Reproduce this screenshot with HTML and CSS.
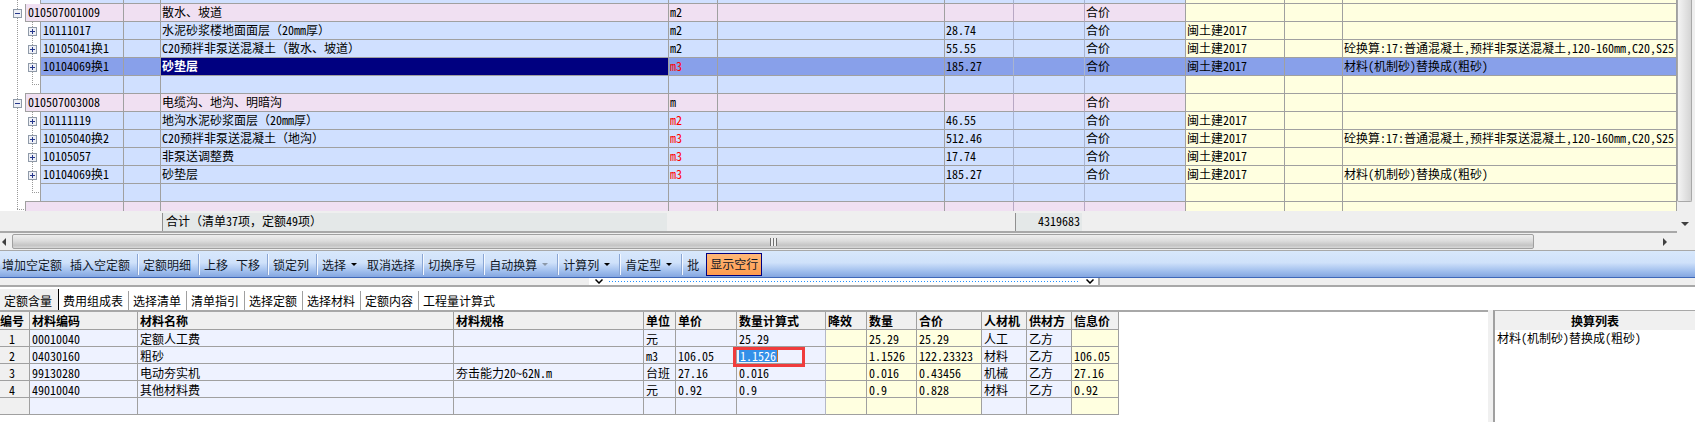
FILE: index.html
```html
<!DOCTYPE html>
<html lang="zh-CN">
<head>
    <meta charset="UTF-8">
    <title>定额</title>
    <link rel="stylesheet" href="styles.css">
</head>
<body>

    <!-- upper grid -->
    <div class="main">
        <div class="main-left">
            <div class="grid-wrap">
                <table class="grid">
                    <colgroup>
                        <col class="c-a"><col class="c-b"><col class="c-code"><col class="c-x"><col class="c-name"><col class="c-unit"><col class="c-y"><col class="c-price"><col class="c-z"><col class="c-type"><col class="c-std"><col class="c-w"><col class="c-note">
                    </colgroup>
                    <tr class="row-cut blue">
                        <td class="a"></td><td class="b"></td><td class="code"></td><td></td><td></td><td></td><td></td><td class="thin"></td><td class="thin"></td><td></td><td class="yel"></td><td class="yel"></td><td class="yel"></td>
                    </tr>
                    <tr class="pink">
                        <td class="a"><span class="exp minus"></span></td><td class="code" colspan="2">010507001009</td><td></td><td>散水、坡道</td><td>m2</td><td></td><td class="thin"></td><td class="thin"></td><td>合价</td><td class="yel"></td><td class="yel"></td><td class="yel"></td>
                    </tr>
                    <tr class="blue">
                        <td class="a"></td><td class="b line"><span class="exp plus"></span></td><td class="code">10111017</td><td></td><td>水泥砂浆楼地面面层<span class="fw">（</span>20mm厚<span class="fw">）</span></td><td>m2</td><td></td><td class="thin">28.74</td><td class="thin"></td><td>合价</td><td class="yel">闽土建2017</td><td class="yel"></td><td class="yel"></td>
                    </tr>
                    <tr class="blue">
                        <td class="a"></td><td class="b line"><span class="exp plus"></span></td><td class="code">10105041换1</td><td></td><td>C20预拌非泵送混凝土<span class="fw">（</span>散水、坡道<span class="fw">）</span></td><td>m2</td><td></td><td class="thin">55.55</td><td class="thin"></td><td>合价</td><td class="yel">闽土建2017</td><td class="yel"></td><td class="yel"><div class="clip">砼换算:17:普通混凝土,预拌非泵送混凝土,120-160mm,C20,S25,</div></td>
                    </tr>
                    <tr class="blue sel">
                        <td class="a"></td><td class="b line"><span class="exp plus"></span></td><td class="code">10104069换1</td><td></td><td class="cur">砂垫层</td><td class="red">m3</td><td></td><td class="thin">185.27</td><td class="thin"></td><td>合价</td><td>闽土建2017</td><td></td><td>材料(机制砂)替换成(粗砂)</td>
                    </tr>
                    <tr class="blue">
                        <td class="a"></td><td class="b end"></td><td class="code"></td><td></td><td></td><td></td><td></td><td class="thin"></td><td class="thin"></td><td></td><td class="yel"></td><td class="yel"></td><td class="yel"></td>
                    </tr>
                    <tr class="pink">
                        <td class="a"><span class="exp minus"></span></td><td class="code" colspan="2">010507003008</td><td></td><td>电缆沟、地沟、明暗沟</td><td>m</td><td></td><td class="thin"></td><td class="thin"></td><td>合价</td><td class="yel"></td><td class="yel"></td><td class="yel"></td>
                    </tr>
                    <tr class="blue">
                        <td class="a"></td><td class="b line"><span class="exp plus"></span></td><td class="code">10111119</td><td></td><td>地沟水泥砂浆面层<span class="fw">（</span>20mm厚<span class="fw">）</span></td><td class="red">m2</td><td></td><td class="thin">46.55</td><td class="thin"></td><td>合价</td><td class="yel">闽土建2017</td><td class="yel"></td><td class="yel"></td>
                    </tr>
                    <tr class="blue">
                        <td class="a"></td><td class="b line"><span class="exp plus"></span></td><td class="code">10105040换2</td><td></td><td>C20预拌非泵送混凝土<span class="fw">（</span>地沟<span class="fw">）</span></td><td class="red">m3</td><td></td><td class="thin">512.46</td><td class="thin"></td><td>合价</td><td class="yel">闽土建2017</td><td class="yel"></td><td class="yel"><div class="clip">砼换算:17:普通混凝土,预拌非泵送混凝土,120-160mm,C20,S25,</div></td>
                    </tr>
                    <tr class="blue">
                        <td class="a"></td><td class="b line"><span class="exp plus"></span></td><td class="code">10105057</td><td></td><td>非泵送调整费</td><td class="red">m3</td><td></td><td class="thin">17.74</td><td class="thin"></td><td>合价</td><td class="yel">闽土建2017</td><td class="yel"></td><td class="yel"></td>
                    </tr>
                    <tr class="blue">
                        <td class="a"></td><td class="b line"><span class="exp plus"></span></td><td class="code">10104069换1</td><td></td><td>砂垫层</td><td class="red">m3</td><td></td><td class="thin">185.27</td><td class="thin"></td><td>合价</td><td class="yel">闽土建2017</td><td class="yel"></td><td class="yel">材料(机制砂)替换成(粗砂)</td>
                    </tr>
                    <tr class="blue">
                        <td class="a"></td><td class="b end"></td><td class="code"></td><td></td><td></td><td></td><td></td><td class="thin"></td><td class="thin"></td><td></td><td class="yel"></td><td class="yel"></td><td class="yel"></td>
                    </tr>
                    <tr class="pink">
                        <td class="a last"></td><td class="code" colspan="2"></td><td></td><td></td><td></td><td></td><td class="thin"></td><td class="thin"></td><td></td><td class="yel"></td><td class="yel"></td><td class="yel"></td>
                    </tr>
                </table>
            </div>
            <div class="sum">
                <div class="sum-label">合计<span class="fw">（</span>清单37项<span class="fw">，</span>定额49项<span class="fw">）</span></div>
                <div class="sum-total">4319683</div>
            </div>
            <div class="hscroll">
                <span class="arrow-left"></span>
                <div class="hthumb"><span class="grip"></span></div>
                <span class="arrow-right"></span>
            </div>
        </div>
        <div class="vscroll">
            <div class="vthumb"></div>
            <span class="arrow-down"></span>
        </div>
    </div>

    <!-- toolbar -->
    <div class="toolbar">
        <span class="tb">增加空定额</span>
        <span class="tb">插入空定额</span>
        <i class="sep"></i>
        <span class="tb">定额明细</span>
        <i class="sep"></i>
        <span class="tb">上移</span>
        <span class="tb">下移</span>
        <i class="sep"></i>
        <span class="tb">锁定列</span>
        <i class="sep"></i>
        <span class="tb">选择<b class="caret"></b></span>
        <span class="tb">取消选择</span>
        <i class="sep"></i>
        <span class="tb">切换序号</span>
        <i class="sep"></i>
        <span class="tb">自动换算<b class="caret off"></b></span>
        <i class="sep"></i>
        <span class="tb">计算列<b class="caret"></b></span>
        <i class="sep"></i>
        <span class="tb">肯定型<b class="caret"></b></span>
        <i class="sep"></i>
        <span class="tb">批</span>
        <i class="sep"></i>
        <span class="tb tb-on">显示空行</span>
    </div>

    <div class="splitter">
        <div class="split-handle">
            <svg class="chev" width="8" height="5" viewBox="0 0 8 5"><polyline points="0.5,0.5 4,4 7.5,0.5" fill="none" stroke="#000" stroke-width="1.5"/></svg>
            <span class="dots"></span>
            <svg class="chev" width="8" height="5" viewBox="0 0 8 5"><polyline points="0.5,0.5 4,4 7.5,0.5" fill="none" stroke="#000" stroke-width="1.5"/></svg>
        </div>
    </div>

    <!-- tabs -->
    <div class="tabs">
        <span class="tab active">定额含量</span>
        <span class="tab">费用组成表</span>
        <span class="tab">选择清单</span>
        <span class="tab">清单指引</span>
        <span class="tab">选择定额</span>
        <span class="tab">选择材料</span>
        <span class="tab">定额内容</span>
        <span class="tab">工程量计算式</span>
    </div>

    <!-- lower grid + side list -->
    <div class="lower">
        <div class="lower-left">
            <table class="sub">
                <colgroup>
                    <col class="s-no"><col class="s-code"><col class="s-name"><col class="s-spec"><col class="s-unit"><col class="s-price"><col class="s-calc"><col class="s-eff"><col class="s-qty"><col class="s-sum"><col class="s-kind"><col class="s-sup"><col class="s-info">
                </colgroup>
                <tr class="head">
                    <th class="no">编号</th><th>材料编码</th><th>材料名称</th><th>材料规格</th><th>单位</th><th>单价</th><th>数量计算式</th><th>降效</th><th>数量</th><th>合价</th><th>人材机</th><th>供材方</th><th>信息价</th>
                </tr>
                <tr>
                    <td class="no">1</td><td>00010040</td><td>定额人工费</td><td></td><td>元</td><td></td><td class="thin">25.29</td><td class="yel"></td><td class="yel">25.29</td><td class="yel">25.29</td><td>人工</td><td>乙方</td><td class="yel"></td>
                </tr>
                <tr>
                    <td class="no">2</td><td>04030160</td><td>粗砂</td><td></td><td>m3</td><td>106.05</td><td class="thin editing"><span class="picked">1.1526</span><span class="mark"></span></td><td class="yel"></td><td class="yel">1.1526</td><td class="yel">122.23323</td><td>材料</td><td>乙方</td><td class="yel">106.05</td>
                </tr>
                <tr>
                    <td class="no">3</td><td>99130280</td><td>电动夯实机</td><td>夯击能力20～62N.m</td><td>台班</td><td>27.16</td><td class="thin">0.016</td><td class="yel"></td><td class="yel">0.016</td><td class="yel">0.43456</td><td>机械</td><td>乙方</td><td class="yel">27.16</td>
                </tr>
                <tr>
                    <td class="no">4</td><td>49010040</td><td>其他材料费</td><td></td><td>元</td><td>0.92</td><td class="thin">0.9</td><td class="yel"></td><td class="yel">0.9</td><td class="yel">0.828</td><td>材料</td><td>乙方</td><td class="yel">0.92</td>
                </tr>
                <tr>
                    <td class="no"></td><td></td><td></td><td></td><td></td><td></td><td class="thin"></td><td class="yel"></td><td class="yel"></td><td class="yel"></td><td></td><td></td><td class="yel"></td>
                </tr>
            </table>
        </div>
        <div class="side">
            <div class="side-head">换算列表</div>
            <div class="side-body">材料(机制砂)替换成(粗砂)</div>
        </div>
    </div>

</body>
</html>
```

FILE: styles.css
```css
* {
    box-sizing: border-box;
}
html, body {
    height: 422px;
    overflow: hidden;
}
body {
    margin: 0;
    background: #fff;
    color: #000;
    font-family: "Noto Sans CJK SC", "Liberation Sans", sans-serif;
    font-size: 12px;
    font-feature-settings: "hwid";
}
table {
    table-layout: fixed;
    border-collapse: separate;
    border-spacing: 0;
}
td, th {
    padding: 0 0 0 1px;
    overflow: hidden;
    white-space: nowrap;
    font-weight: normal;
    text-align: left;
}
.fw {
    font-feature-settings: normal;
}

/* Upper grid */
.main {
    display: flex;
    height: 250px;
    background: #efefef;
}
.main-left {
    width: 1677px;
}
.grid-wrap {
    height: 211px;
    overflow: hidden;
    background: #fff;
}
.grid {
    width: 1677px;
}
.c-a { width: 25px; }
.c-b { width: 15px; }
.c-code { width: 84px; }
.c-x { width: 37px; }
.c-name { width: 508px; }
.c-unit { width: 49px; }
.c-y { width: 227px; }
.c-price { width: 69px; }
.c-z { width: 71px; }
.c-type { width: 101px; }
.c-std { width: 99px; }
.c-w { width: 58px; }
.c-note { width: 334px; }
.grid tr {
    height: 18px;
}
.grid tr.row-cut {
    height: 4px;
}
.grid td {
    height: 18px;
    padding-bottom: 2px;
    line-height: 15px;
    border-right: 1px solid #a0a0a0;
    border-bottom: 1px solid #a0a0a0;
}
.grid .row-cut td {
    height: 4px;
    padding-bottom: 0;
    line-height: 0;
}
.pink td {
    background: #f0e0f2;
}
.blue td {
    background: #d0e0ff;
}
.grid td.a, .grid td.b {
    padding: 0;
    border-right: none;
    border-bottom: none;
    background-color: #fff;
}
.grid td.a {
    background-image: repeating-linear-gradient(#999 0 1px, transparent 1px 2px);
    background-position: 17px 0;
    background-size: 1px 100%;
    background-repeat: no-repeat;
}
.grid td.a .exp {
    margin-left: 13px;
}
.grid td.a.last {
    background-image: repeating-linear-gradient(#999 0 1px, transparent 1px 2px), repeating-linear-gradient(90deg, #999 0 1px, transparent 1px 2px);
    background-position: 17px 0, 17px 7px;
    background-size: 1px 8px, 8px 1px;
}
.grid td.b.line {
    background-image: repeating-linear-gradient(#999 0 1px, transparent 1px 2px);
    background-position: 7px 0;
    background-size: 1px 100%;
    background-repeat: no-repeat;
}
.grid td.b.end {
    border-bottom: 1px solid #a0a0a0;
    background-image: repeating-linear-gradient(#999 0 1px, transparent 1px 2px), repeating-linear-gradient(90deg, #999 0 1px, transparent 1px 2px);
    background-position: 7px 0, 7px 8px;
    background-size: 1px 9px, 8px 1px;
    background-repeat: no-repeat;
}
.grid td.b .exp {
    margin-left: 3px;
}
.grid td.code {
    padding-left: 2px;
    border-left: 1px solid #a0a0a0;
}
.grid td.thin {
    border-right-color: #a8b4d0;
}
.pink td.thin {
    border-right-color: #b8a8c4;
}
.grid td.yel, .sub td.yel {
    background: #ffffe0;
}
.sel td {
    background: #88a0ea;
}
.sel td.cur {
    background: #000080;
    color: #fff;
    font-weight: bold;
}
.red {
    color: #f00;
}
.clip {
    width: 100%;
    overflow: hidden;
}
.exp {
    display: block;
    width: 9px;
    height: 9px;
    border: 1px solid #8f9aa8;
    background-color: #eef0f6;
}
.minus {
    background-image: linear-gradient(#26388c, #26388c);
    background-size: 5px 1px;
    background-position: center;
    background-repeat: no-repeat;
}
.plus {
    background-image: linear-gradient(#26388c, #26388c), linear-gradient(#26388c, #26388c);
    background-size: 5px 1px, 1px 5px;
    background-position: center, center;
    background-repeat: no-repeat;
}

/* Totals row */
.sum {
    display: flex;
    height: 22px;
    padding-top: 2px;
    border-bottom: 2px solid #a8a8a8;
    background: #efefef;
    line-height: 16px;
}
.sum-label {
    width: 505px;
    height: 18px;
    margin-left: 162px;
    padding-left: 3px;
    background: #e4e8e8;
    border-left: 1px solid #909090;
}
.sum-total {
    width: 67px;
    height: 18px;
    margin-left: 348px;
    padding-right: 2px;
    text-align: right;
    background: #e4e8e8;
    border-left: 1px solid #909090;
}

/* Scrollbars */
.hscroll {
    display: flex;
    align-items: center;
    height: 17px;
    background: #efefef;
}
.arrow-left {
    width: 0;
    height: 0;
    margin: 0 6px 0 2px;
    border: 4px solid transparent;
    border-left: none;
    border-right: 4px solid #404040;
}
.hthumb {
    display: flex;
    align-items: center;
    justify-content: flex-end;
    width: 1522px;
    height: 15px;
    padding-right: 756px;
    border: 1px solid #a0a0a0;
    border-radius: 2px;
    background: linear-gradient(#eeeeee, #dcdcdc 45%, #c4c4c4 80%, #d8d8d8);
}
.grip {
    width: 7px;
    height: 8px;
    background: repeating-linear-gradient(90deg, #707070 0 1px, #f0f0f0 1px 3px);
}
.arrow-right {
    width: 0;
    height: 0;
    margin-left: 129px;
    border: 4px solid transparent;
    border-right: none;
    border-left: 4px solid #404040;
}
.vscroll {
    display: flex;
    flex-direction: column;
    align-items: center;
    width: 18px;
}
.vthumb {
    width: 15px;
    height: 202px;
    margin-right: 3px;
    border: 1px solid #a8a8a8;
    border-top: none;
    border-radius: 0 0 2px 2px;
    background: linear-gradient(90deg, #f4f4f4, #d4d4d4);
}
.arrow-down {
    width: 0;
    height: 0;
    margin-top: 20px;
    margin-right: 3px;
    border: 4px solid transparent;
    border-bottom: none;
    border-top: 4px solid #404040;
}

/* Toolbar */
.toolbar {
    display: flex;
    align-items: center;
    height: 28px;
    border-top: 1px solid #a8a8a8;
    border-bottom: 1px solid #3f68b8;
    background: linear-gradient(#d8e8fc, #cfe1fa 45%, #9dbcec 80%, #84a6e0);
    color: #101828;
}
.tb {
    display: flex;
    align-items: center;
    padding: 1px 4px 0;
    line-height: 22px;
    white-space: nowrap;
}
.tb:first-child {
    padding-left: 2px;
}
.sep {
    width: 2px;
    height: 21px;
    margin-left: 3px;
    border-left: 1px solid #8aa6d4;
    border-right: 1px solid #f4f8ff;
}
.caret {
    width: 0;
    height: 0;
    margin: 0 2px 0 5px;
    border: 3px solid transparent;
    border-bottom: none;
    border-top: 3px solid #000;
}
.caret.off {
    border-top-color: #8c98a8;
}
.tb-on {
    margin-left: -2px;
    padding: 0 3px;
    height: 23px;
    border: 1px solid #000080;
    background: linear-gradient(#ffb878, #ff9c50);
}

/* Splitter */
.splitter {
    height: 9px;
    padding-left: 589px;
    border-bottom: 2px solid #a8a8a8;
    background: #efefef;
}
.split-handle {
    display: flex;
    align-items: center;
    gap: 6px;
    width: 511px;
    height: 7px;
    padding: 0 4px 0 6px;
    background: #fff;
    border-right: 2px solid #a8a8a8;
}
.dots {
    flex: 1;
    height: 1px;
    background: repeating-linear-gradient(90deg, #2090ff 0 1px, transparent 1px 3px);
}

/* Tabs */
.tabs {
    display: flex;
    align-items: flex-end;
    height: 25px;
    padding-bottom: 1px;
    line-height: 20px;
}
.tab {
    height: 20px;
    padding: 0 5px 0 4px;
    border-right: 1px solid #a0a0a0;
}
.tab:last-child {
    border-right: none;
}
.tab.active {
    width: 59px;
    height: 22px;
    padding-top: 2px;
    background: #f0f0f0;
    border-right: 1px solid #000;
}

/* Lower grid */
.lower {
    display: flex;
    height: 110px;
}
.lower-left {
    width: 1488px;
    border-top: 2px solid #a8a8a8;
    margin-top: -2px;
}
.sub {
    width: 1119px;
}
.s-no { width: 30px; }
.s-code { width: 108px; }
.s-name { width: 316px; }
.s-spec { width: 190px; }
.s-unit { width: 32px; }
.s-price { width: 61px; }
.s-calc { width: 89px; }
.s-eff { width: 41px; }
.s-qty { width: 50px; }
.s-sum { width: 65px; }
.s-kind { width: 45px; }
.s-sup { width: 45px; }
.s-info { width: 47px; }
.sub tr {
    height: 17px;
}
.sub td, .sub th {
    height: 17px;
    padding-left: 2px;
    line-height: 15px;
    border-right: 1px solid #a0a0a0;
    border-bottom: 1px solid #a0a0a0;
    background: #eef2ff;
}
.sub td.thin {
    border-right-color: #b4b8c8;
}
.sub .head th {
    height: 18px;
    line-height: 16px;
    padding-left: 2px;
    font-weight: bold;
    background: #f0f0f0;
}
.sub th.no {
    padding-left: 0;
}
.sub td.no {
    padding: 0 5px 0 0;
    text-align: center;
    background: #f0f0f0;
}
.editing {
    position: relative;
    overflow: visible;
}
.picked {
    display: inline-block;
    padding: 0 1px;
    line-height: 13px;
    color: #fff;
    background: #3390e8;
    border-right: 1px solid #c87020;
}
.mark {
    position: absolute;
    left: -4px;
    top: 0;
    width: 72px;
    height: 20px;
    border: 3px solid #f03c3c;
}

/* Side list */
.side {
    width: 207px;
    padding-left: 5px;
    background: #f0f0f0;
    margin-top: -2px;
}
.side-head {
    height: 20px;
    line-height: 20px;
    text-align: center;
    font-weight: bold;
    border-top: 1px solid #a8a8a8;
    border-left: 2px solid #a0a0a0;
    background: #f0f0f0;
}
.side-body {
    height: 92px;
    padding-left: 2px;
    line-height: 16px;
    border-left: 2px solid #a0a0a0;
    background: #fff;
}
```
